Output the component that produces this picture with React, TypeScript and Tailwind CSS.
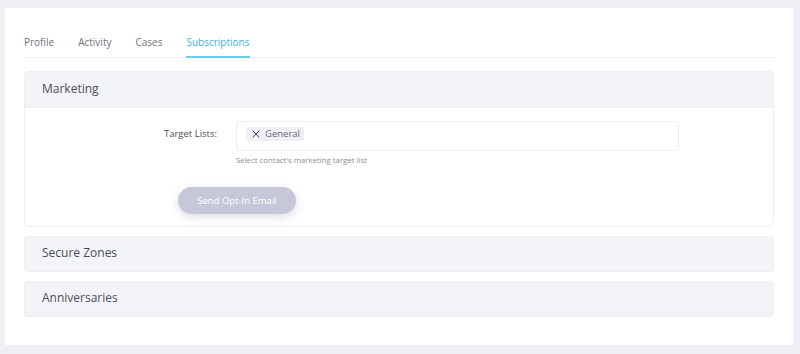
import { X } from 'lucide-react';

const tabs = ['Profile', 'Activity', 'Cases', 'Subscriptions'];

function CollapsedPanel({ title }: { title: string }) {
  return (
    <div className="h-[36px] rounded-[4px] bg-[#f3f4f8] border border-[#eceef3] flex items-center px-[17px] pb-[2px]">
      <span className="text-[12px] font-medium text-[#4b4d57]">{title}</span>
    </div>
  );
}

export default function App() {
  return (
    <div
      className="w-[800px] h-[354px] bg-[#eef0f5] pt-[8px] pl-[5px] pr-[7px]"
      style={{ fontFamily: '"Open Sans", "Liberation Sans", sans-serif' }}
    >
      <div className="bg-white h-[337px] px-[19px] pt-[25px]">
        <div className="flex gap-[24px] border-b border-[#eef0f4] h-[25px]">
          {tabs.map((t) => (
            <div
              key={t}
              className={
                t === 'Subscriptions'
                  ? 'text-[10px] pt-[2px] text-[#3db3e3] border-b-2 border-[#6ccbef] -mb-px'
                  : 'text-[10px] pt-[2px] text-[#6f717a]'
              }
            >
              {t}
            </div>
          ))}
        </div>

        <div className="mt-[13px] rounded-[4px] border border-[#eceef3]">
          <div className="h-[36px] bg-[#f3f4f8] border-b border-[#eceef3] rounded-t-[4px] flex items-center px-[17px] pb-[2px]">
            <span className="text-[12px] font-medium text-[#4b4d57]">Marketing</span>
          </div>
          <div className="pt-[13px] pb-[12px]">
            <div className="flex">
              <div className="w-[192px] text-right text-[9.5px] text-[#4b4d57] pt-[6px]">Target Lists:</div>
              <div className="ml-[19px]">
                <div className="w-[443px] h-[30px] border border-[#eceef3] rounded-[3px] flex items-start pt-[5px] px-[9px]">
                  <span className="flex items-center gap-[3px] bg-[#eef0f5] rounded-[3px] px-[4px] h-[14px] text-[9.5px] text-[#6a6c76]">
                    <X className="w-[12px] h-[12px] text-[#3e404a]" strokeWidth={2} />
                    General
                  </span>
                </div>
                <div className="text-[7.8px] text-[#8c8e97] mt-[4px]">Select contact's marketing target list</div>
              </div>
            </div>
            <div className="pl-[153px] mt-[19px]">
              <button className="w-[118px] h-[27px] rounded-full bg-[#c6c7d9] text-white text-[9.5px] shadow-[0_3px_8px_rgba(120,120,150,0.25)]">
                Send Opt-In Email
              </button>
            </div>
          </div>
        </div>

        <div className="mt-[9px] flex flex-col gap-[9px]">
          <CollapsedPanel title="Secure Zones" />
          <CollapsedPanel title="Anniversaries" />
        </div>
      </div>
    </div>
  );
}
